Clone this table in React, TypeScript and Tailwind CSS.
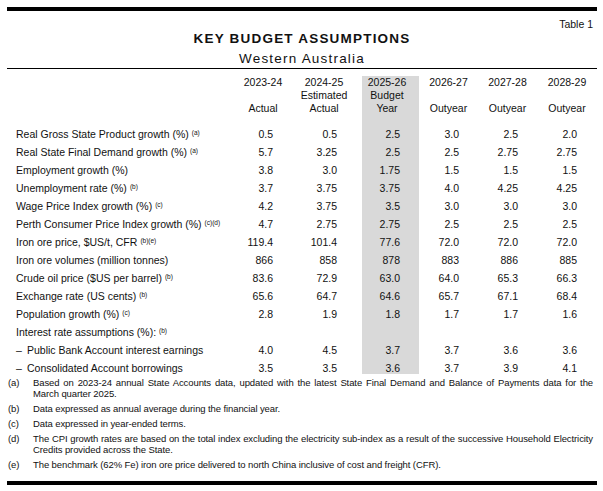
import React from "react";

type Row = { label: string; sup?: string; dash?: boolean; values?: string[] };

const rows: Row[] = [
  { label: "Real Gross State Product growth (%)", sup: "(a)", values: ["0.5", "0.5", "2.5", "3.0", "2.5", "2.0"] },
  { label: "Real State Final Demand growth (%)", sup: "(a)", values: ["5.7", "3.25", "2.5", "2.5", "2.75", "2.75"] },
  { label: "Employment growth (%)", values: ["3.8", "3.0", "1.75", "1.5", "1.5", "1.5"] },
  { label: "Unemployment rate (%)", sup: "(b)", values: ["3.7", "3.75", "3.75", "4.0", "4.25", "4.25"] },
  { label: "Wage Price Index growth (%)", sup: "(c)", values: ["4.2", "3.75", "3.5", "3.0", "3.0", "3.0"] },
  { label: "Perth Consumer Price Index growth (%)", sup: "(c)(d)", values: ["4.7", "2.75", "2.75", "2.5", "2.5", "2.5"] },
  { label: "Iron ore price, $US/t, CFR", sup: "(b)(e)", values: ["119.4", "101.4", "77.6", "72.0", "72.0", "72.0"] },
  { label: "Iron ore volumes (million tonnes)", values: ["866", "858", "878", "883", "886", "885"] },
  { label: "Crude oil price ($US per barrel)", sup: "(b)", values: ["83.6", "72.9", "63.0", "64.0", "65.3", "66.3"] },
  { label: "Exchange rate (US cents)", sup: "(b)", values: ["65.6", "64.7", "64.6", "65.7", "67.1", "68.4"] },
  { label: "Population growth (%)", sup: "(c)", values: ["2.8", "1.9", "1.8", "1.7", "1.7", "1.6"] },
  { label: "Interest rate assumptions (%):", sup: "(b)" },
  { label: "Public Bank Account interest earnings", dash: true, values: ["4.0", "4.5", "3.7", "3.7", "3.6", "3.6"] },
  { label: "Consolidated Account borrowings", dash: true, values: ["3.5", "3.5", "3.6", "3.7", "3.9", "4.1"] },
];

const colCls = [
  "w-[60px] pr-[20px]",
  "w-[69px] pr-[25px]",
  "w-[57px] pr-[19px] bg-[#d9d9d9]",
  "w-[59px] pr-[19px]",
  "w-[59px] pr-[19px]",
  "w-[60px] pr-[20px]",
];

const headCls = [
  "w-[60px]",
  "w-[69px] pr-[7px]",
  "w-[57px] pr-[7px] bg-[#d9d9d9]",
  "w-[59px]",
  "w-[59px]",
  "w-[60px]",
];

const headers: [string, string, string][] = [
  ["2023-24", "", "Actual"],
  ["2024-25", "Estimated", "Actual"],
  ["2025-26", "Budget", "Year"],
  ["2026-27", "", "Outyear"],
  ["2027-28", "", "Outyear"],
  ["2028-29", "", "Outyear"],
];

const notes: [string, string[]][] = [
  ["(a)", ["Based on 2023-24 annual State Accounts data, updated with the latest State Final Demand and Balance of Payments data for the", "March quarter 2025."]],
  ["(b)", ["Data expressed as annual average during the financial year."]],
  ["(c)", ["Data expressed in year-ended terms."]],
  ["(d)", ["The CPI growth rates are based on the total index excluding the electricity sub-index as a result of the successive Household Electricity", "Credits provided across the State."]],
  ["(e)", ["The benchmark (62% Fe) iron ore price delivered to north China inclusive of cost and freight (CFR)."]],
];

export default function App() {
  return (
    <div
      className="w-[603px] h-[491px] bg-white text-[#111] overflow-hidden"
      style={{ fontFamily: '"Liberation Sans", Arial, sans-serif' }}
    >
      <div className="ml-[7px] w-[590px] pt-[7px]">
        <div className="h-[4px] bg-black" />
        <div className="mt-[7px] pr-[4px] text-right text-[10.5px] leading-[12px]">Table 1</div>
        <div className="mt-[1px] text-center font-bold text-[13.5px] leading-[16px] tracking-[1.2px]">
          KEY BUDGET ASSUMPTIONS
        </div>
        <div className="mt-[4px] text-center text-[13.5px] leading-[16px] tracking-[1.2px]">
          Western Australia
        </div>
        <div className="mt-[1px] h-px bg-black" />

        <div className="mt-[7px] flex text-[10.5px]">
          <div className="w-[226px]" />
          {headers.map((h, i) => (
            <div key={i} className={`${headCls[i]} h-[46px] flex flex-col items-center leading-[13px]`}>
              <div>{h[0]}</div>
              <div>{h[1] || "\u00a0"}</div>
              <div>{h[2]}</div>
            </div>
          ))}
        </div>

        {rows.map((r, ri) => (
          <div key={ri} className="flex h-[18px] text-[10.5px] leading-[12px]">
            <div className="w-[226px] pl-[9px] pt-[6px] whitespace-nowrap">
              {r.dash ? (
                <span className="inline-flex">
                  <span className="w-[11px]">–</span>
                  <span>{r.label}</span>
                </span>
              ) : (
                r.label
              )}
              {r.sup && (
                <span className="relative top-[-3px] ml-[3px] text-[6.5px]">{r.sup}</span>
              )}
            </div>
            {colCls.map((c, ci) => (
              <div key={ci} className={`${c} pt-[6px] text-right`}>
                {r.values ? r.values[ci] : ""}
              </div>
            ))}
          </div>
        ))}

        <div className="mt-[3px] flex flex-col gap-[4px] text-[9.5px] leading-[11px] tracking-[-0.1px]">
          {notes.map(([k, lines]) => (
            <div key={k} className="flex">
              <div className="w-[26px] pl-[1px] shrink-0">{k}</div>
              <div className="flex-1 pr-[4px]">
                {lines.map((l, li) =>
                  li < lines.length - 1 ? (
                    <div key={li} className="whitespace-nowrap text-justify [text-align-last:justify]">
                      {l}
                    </div>
                  ) : (
                    <div key={li} className="whitespace-nowrap">{l}</div>
                  )
                )}
              </div>
            </div>
          ))}
        </div>

        <div className="mt-[11px] h-[4px] bg-black" />
      </div>
    </div>
  );
}
